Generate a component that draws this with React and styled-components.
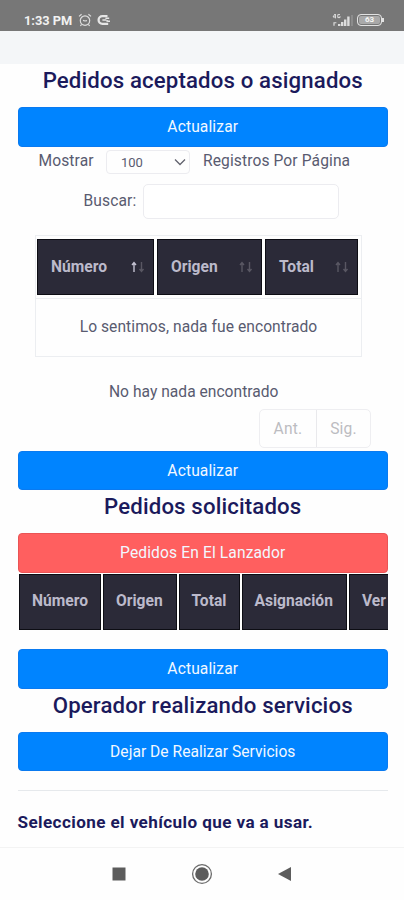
import styled, { createGlobalStyle } from "styled-components"

const GlobalStyle = createGlobalStyle`
  * {
    box-sizing: border-box;
  }

  body {
    margin: 0;
    background: #fefefe;
    font-family: Roboto, "Liberation Sans", sans-serif;
    color: #595b70;
  }
`

const orderColumns = [
  { label: "Número", width: 117, sorted: true },
  { label: "Origen", width: 105 },
  { label: "Total", width: 93 },
]

const requestColumns = [
  { label: "Número", width: 82 },
  { label: "Origen", width: 73.5 },
  { label: "Total", width: 61 },
  { label: "Asignación", width: 105.5 },
  { label: "Ver", width: 60 },
]

// Status bar
const AlarmIcon = () => (
  <svg width="14" height="14" viewBox="0 0 14 14" fill="none" stroke="#dcdcdc" strokeWidth="1.2">
    <circle cx="7" cy="7.6" r="4.7" />
    <path d="M1 3.4 3.6 1.2M13 3.4 10.4 1.2M5 7.4 7 8 9 7.6M3.6 11.4 2.4 13M10.4 11.4 11.6 13" />
  </svg>
)

const AppIcon = () => (
  <svg width="14" height="12" viewBox="0 0 14 12" fill="none" stroke="#e6e6e6">
    <path d="M10.5 2.2H5.4a3.8 3.8 0 0 0 0 7.6h5.8" strokeWidth="2.3" />
    <path d="M5.4 6h4M8.4 4.2h3.8M10.2 6v2M11 7.2h2" strokeWidth="1.4" />
  </svg>
)

const SignalIcon = () => (
  <svg width="22" height="14" viewBox="0 0 22 14" fill="#dedede">
    <path d="M3 1 1 4h3M3.4 1v4.4M8 1.6H5.8v3H8V3.2" fill="none" stroke="#dedede" />
    <path d="M1.4 9.2h3v1H2.6v2.6H1.4zM6 11h2.4v2H6zM9 9h2.4v4H9zM12 6.5h2.4V13H12zM15.2 3.6h2.4V13h-2.4z" />
    <path d="M19.4 2h1.2v11h-1.2z" opacity=".35" />
  </svg>
)

const StatusBar = () => (
  <StatusWrapper>
    <Clock>1:33 PM</Clock>
    <AlarmIcon />
    <AppIcon />
    <StatusRight>
      <SignalIcon />
      <Battery>63</Battery>
    </StatusRight>
  </StatusWrapper>
)

const StatusWrapper = styled.header`
  display: flex;
  align-items: center;
  gap: 5px;
  height: 31px;
  padding: 9px 22px 0 24px;
  background: #777777;
`

const Clock = styled.span`
  margin-right: 1px;
  font-size: 12.8px;
  font-weight: 700;
  color: #f1f1f1;
`

const StatusRight = styled.div`
  display: flex;
  align-items: center;
  gap: 3px;
  margin-left: auto;
`

const Battery = styled.span`
  position: relative;
  width: 25px;
  height: 12px;
  border: 1.5px solid #e2e2e2;
  border-radius: 4px;
  box-shadow: inset 0 0 0 1px #777777;
  background: #a9a9a9;
  font-size: 8px;
  font-weight: 700;
  line-height: 10px;
  text-align: center;
  color: #f6f6f6;

  &::after {
    content: "";
    position: absolute;
    top: 3px;
    right: -3px;
    width: 2px;
    height: 4px;
    background: #e2e2e2;
  }
`

const TopStrip = styled.div`
  height: 33px;
  background: #f4f6f8;
`

const Page = styled.main`
  display: flex;
  flex-direction: column;
  height: 783px;
  padding: 0 16px 0 17.5px;
`

const Title = styled.h2`
  height: 43px;
  margin: 0;
  font-size: 22.2px;
  font-weight: 500;
  line-height: 32px;
  letter-spacing: 0.15px;
  text-align: center;
  white-space: nowrap;
  color: #1b1a5c;
`

const Button = styled.button`
  flex: none;
  width: 100%;
  height: 39.5px;
  padding: 0;
  border: 1px solid ${(props) => (props.$danger ? "#ea5455" : "#0a7af0")};
  border-radius: 4px;
  background: ${(props) => (props.$danger ? "#ff5f5f" : "#0084ff")};
  font: 400 15.6px Roboto, sans-serif;
  letter-spacing: ${(props) => props.$spacing || "0.12px"};
  color: #f2f8ff;
`

// Table filters
const LengthRow = styled.div`
  display: flex;
  align-items: center;
  height: 28.5px;
  padding-left: 21px;
  font-size: 15.6px;
  letter-spacing: 0.1px;
  white-space: nowrap;
`

const Select = styled.div`
  display: flex;
  align-items: center;
  justify-content: space-between;
  width: 84px;
  height: 24px;
  margin: 3px 13px 0 auto;
  padding: 0 3px 0 14px;
  border: 1px solid #ececf0;
  border-radius: 4px;
  font-size: 13px;
  letter-spacing: 0;
`

const LengthLabel = styled.span`
  width: ${(props) => props.$width}px;
`

const SearchRow = styled.div`
  display: flex;
  align-items: center;
  gap: 6px;
  height: 52px;
  padding-left: 66px;
  font-size: 15.6px;
  letter-spacing: 0.1px;
`

const SearchLabel = styled.label`
  width: 53.5px;
  white-space: nowrap;
`

const SearchInput = styled.input`
  width: 196px;
  height: 35px;
  border: 1px solid #ececf0;
  border-radius: 5px;
  background: #ffffff;
`

// Orders table
const OrdersTable = styled.section`
  width: 327px;
  height: 122px;
  margin: 8px 0 0 17.5px;
  border: 1px solid #eceef1;
`

const OrdersHead = styled.div`
  display: flex;
  gap: 3px;
  height: 63px;
  padding: 3px 0 3px 1px;
  border-bottom: 1px solid #eceef1;
`

const HeadCell = styled.div`
  display: flex;
  flex: none;
  align-items: center;
  justify-content: space-between;
  width: ${(props) => props.$width}px;
  height: 56px;
  padding: ${(props) => (props.$compact ? "0 0 2px 12px" : "0 8px 0 13px")};
  border: 1px solid #0d0d14;
  background: #2b2a38;
  font-size: 15.6px;
  font-weight: 700;
  white-space: nowrap;
  color: #bcbacb;
`

const SortArrows = styled.svg`
  width: 15px;
  height: 12px;
  fill: none;
  stroke: #595763;
  stroke-width: 1.4;
`

const Sort = ({ active }) => (
  <SortArrows viewBox="0 0 15 12">
    <path d="M4 11V2M2 4 4 1.6 6 4" stroke={active ? "#c4c2d2" : undefined} />
    <path d="M11.5 1v9M9.5 8l2 2.4 2-2.4" />
  </SortArrows>
)

const EmptyRow = styled.p`
  height: 57px;
  margin: 0;
  line-height: 57px;
  font-size: 15.6px;
  letter-spacing: 0.06px;
  text-align: center;
`

const Info = styled.p`
  height: 50.8px;
  margin: 0;
  padding: 26px 18px 0 0;
  font-size: 15.6px;
  line-height: 19px;
  letter-spacing: 0.02px;
  text-align: center;
`

const Pagination = styled.nav`
  display: flex;
  align-self: flex-end;
  height: 39px;
  margin: 1px 17px 3px 0;
  border: 1px solid #eeeef1;
  border-radius: 5px;
`

const PageLink = styled.a`
  width: ${(props) => props.$width}px;
  line-height: 38px;
  font-size: 15.6px;
  letter-spacing: 0.2px;
  text-align: center;
  color: #bcbcc1;

  & + & {
    border-left: 1px solid #e9e9ec;
  }
`

const RequestTable = styled.section`
  display: flex;
  flex: none;
  gap: 2px;
  height: 57.3px;
  margin-bottom: 19.2px;
  padding: 1.3px 0 0 1.5px;
  overflow: hidden;
`

const Divider = styled.hr`
  width: 100%;
  height: 1px;
  margin: 19px 0 20.5px;
  border: 0;
  background: #e6e9ec;
`

const VehicleLabel = styled.h3`
  margin: 0;
  font-size: 17.1px;
  font-weight: 700;
  line-height: 20px;
  letter-spacing: 0.4px;
  white-space: nowrap;
  color: #1b1a5c;
`

const NavBar = styled.footer`
  display: flex;
  align-items: center;
  justify-content: center;
  gap: 65px;
  height: 53px;
  border-top: 1px solid #f3f3f3;
  background: #fefefe;
`

const AndroidNav = () => (
  <NavBar>
    <svg width="14" height="14">
      <path d="M.5.5h13v13H.5z" fill="#5c5c5c" />
    </svg>
    <svg width="22" height="22" viewBox="0 0 22 22">
      <circle cx="11" cy="11" r="9.4" fill="none" stroke="#6b6b6b" strokeWidth="1.3" />
      <circle cx="11" cy="11" r="6.8" fill="#5c5c5c" />
    </svg>
    <svg width="14" height="16" viewBox="0 0 14 16">
      <path d="M0 8 13 1v14z" fill="#5c5c5c" />
    </svg>
  </NavBar>
)

const App = () => {
  return (
    <>
      <GlobalStyle />
      <StatusBar />
      <TopStrip />
      <Page>
        <Title>Pedidos aceptados o asignados</Title>
        <Button>Actualizar</Button>

        <LengthRow>
          <LengthLabel $width={55}>Mostrar</LengthLabel>
          <Select>
            100
            <svg width="12" height="8" viewBox="0 0 12 8" fill="none" stroke="#62636e" strokeWidth="1.3">
              <path d="M1 1.5 6 6.5 11 1.5" />
            </svg>
          </Select>
          <LengthLabel $width={185}>Registros Por Página</LengthLabel>
        </LengthRow>
        <SearchRow>
          <SearchLabel htmlFor="search">Buscar:</SearchLabel>
          <SearchInput id="search" />
        </SearchRow>

        <OrdersTable>
          <OrdersHead>
            {orderColumns.map((column) => (
              <HeadCell key={column.label} $width={column.width}>
                {column.label}
                <Sort active={column.sorted} />
              </HeadCell>
            ))}
          </OrdersHead>
          <EmptyRow>Lo sentimos, nada fue encontrado</EmptyRow>
        </OrdersTable>
        <Info>No hay nada encontrado</Info>
        <Pagination>
          <PageLink $width={56}>Ant.</PageLink>
          <PageLink $width={54}>Sig.</PageLink>
        </Pagination>
        <Button>Actualizar</Button>

        <Title>Pedidos solicitados</Title>
        <Button $danger>Pedidos En El Lanzador</Button>
        <RequestTable>
          {requestColumns.map((column) => (
            <HeadCell key={column.label} $width={column.width} $compact>
              {column.label}
            </HeadCell>
          ))}
        </RequestTable>
        <Button>Actualizar</Button>

        <Title>Operador realizando servicios</Title>
        <Button $spacing="0.02px">Dejar De Realizar Servicios</Button>
        <Divider />
        <VehicleLabel>Seleccione el vehículo que va a usar.</VehicleLabel>
      </Page>
      <AndroidNav />
    </>
  )
}

export default App
